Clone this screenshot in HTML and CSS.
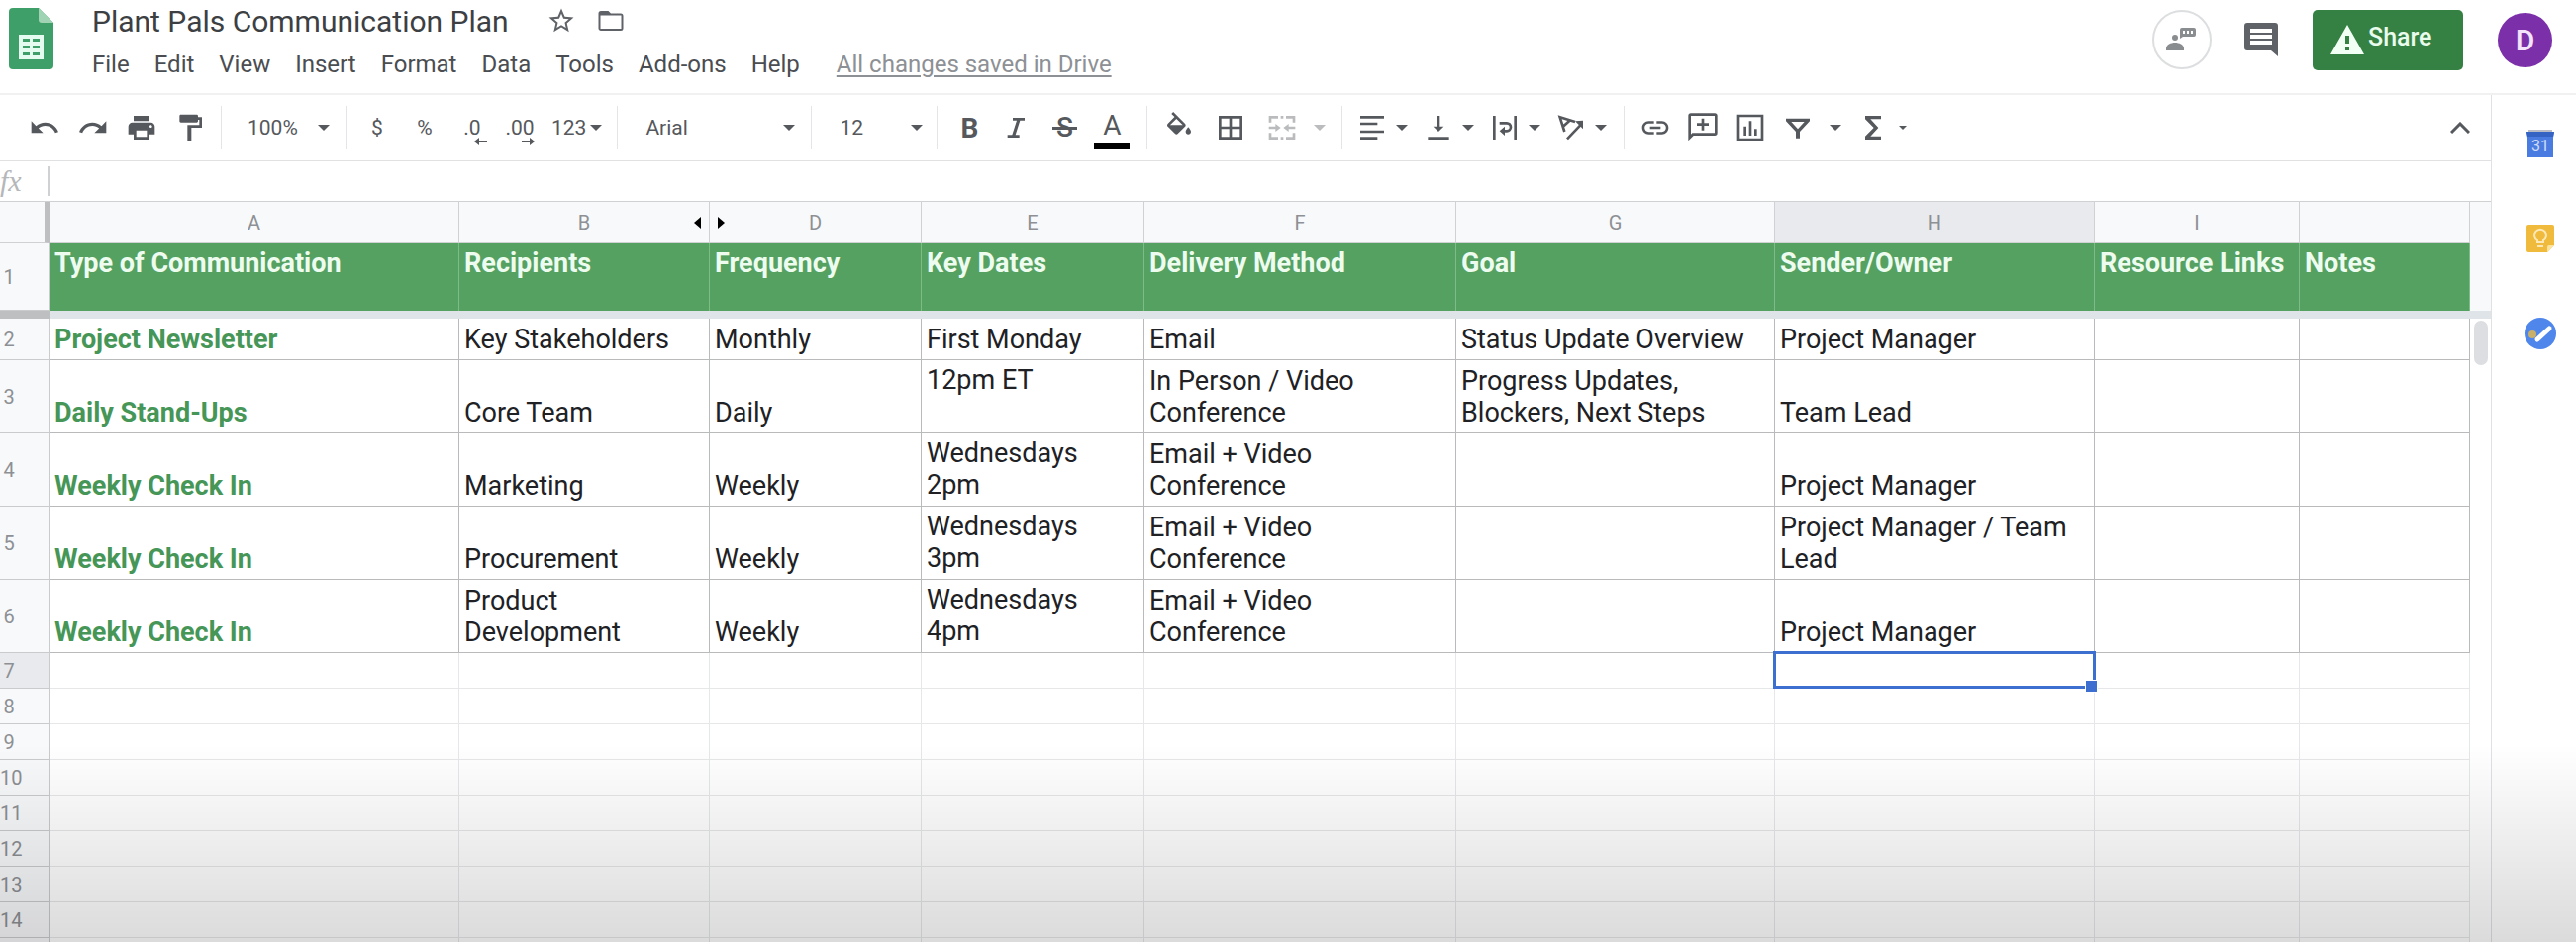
FILE: index.html
```html
<!DOCTYPE html>
<html lang="en">
<head>
<meta charset="utf-8">
<title>Plant Pals Communication Plan</title>
<link rel="stylesheet" href="styles.css">
</head>
<body>
<div class="app">
  <header class="topbar">
    <svg class="logo" viewBox="0 0 45 62" aria-hidden="true">
      <path fill="#3f9f68" d="M4 0h26l15 15v43a4 4 0 0 1-4 4H4a4 4 0 0 1-4-4V4a4 4 0 0 1 4-4z"/>
      <path fill="#9fd3b4" d="M30 0l15 15H33a3 3 0 0 1-3-3z"/>
      <path fill="#e6fbef" fill-rule="evenodd" d="M10 27h25v25H10zM14 31v3h7v-3zM24 31v3h7v-3zM14 38v3h7v-3zM24 38v3h7v-3zM14 45v3h7v-3zM24 45v3h7v-3z"/>
    </svg>
    <div class="doc">
      <div class="title-row">
        <h1 class="title">Plant Pals Communication Plan</h1>
        <button class="plain" aria-label="Star"><svg class="title-icon" viewBox="0 0 24 24"><path d="M22 9.24l-7.19-.62L12 2 9.19 8.63 2 9.24l5.46 4.73L5.82 21 12 17.27 18.18 21l-1.63-7.03L22 9.24zM12 15.4l-3.76 2.27 1-4.28-3.32-2.88 4.38-.38L12 6.1l1.71 4.04 4.38.38-3.32 2.88 1 4.28L12 15.4z"/></svg></button>
        <button class="plain" aria-label="Move"><svg class="title-icon" viewBox="0 0 24 24"><path fill-rule="evenodd" d="M20 6h-8l-2-2H4a2 2 0 0 0-2 2v12c0 1.100.9 2 2 2h16a2 2 0 0 0 2-2V8a2 2 0 0 0-2-2zM20.400 18.400H3.600V7.600H20.400z"/></svg></button>
      </div>
      <nav class="menu">
        <button class="plain">File</button>
        <button class="plain">Edit</button>
        <button class="plain">View</button>
        <button class="plain">Insert</button>
        <button class="plain">Format</button>
        <button class="plain">Data</button>
        <button class="plain">Tools</button>
        <button class="plain">Add-ons</button>
        <button class="plain">Help</button>
        <a class="saved" href="#">All changes saved in Drive</a>
      </nav>
    </div>
    <div class="actions">
      <button class="presence" aria-label="Viewers">
        <svg viewBox="0 0 56 56"><g fill="#8a8d90"><circle cx="21" cy="26" r="3"/><path d="M12 39v-2c0-4 5-6 9-6s9 2 9 6v2z"/><path fill-rule="evenodd" d="M28 16h12a2 2 0 0 1 2 2v5a2 2 0 0 1-2 2H29l-3 2V18a2 2 0 0 1 2-2zM29 19v3h2v-3zM33 19v3h2v-3zM37 19v3h2v-3z"/></g></svg>
      </button>
      <button class="plain" aria-label="Comments"><svg class="comments" viewBox="0 0 34 34"><path fill="#5f6368" fill-rule="evenodd" d="M3 0h28a3 3 0 0 1 3 3v31l-7-6H3a3 3 0 0 1-3-3V3a3 3 0 0 1 3-3zM6 6v4h22V6zM6 12v4h22v-4zM6 18v4h22v-4z"/></svg></button>
      <button class="share">
        <svg class="warn" viewBox="0 0 34 30"><path fill="#f2fff4" fill-rule="evenodd" d="M17 0l17 30H0zM15 11v8h4v-8zM15 22v4h4v-4z"/></svg>
        <span class="share-text">Share</span>
      </button>
      <button class="avatar">D</button>
    </div>
  </header>

  <div class="body">
    <main class="editor">
      <div class="toolbar">
        <div class="group g-history">
          <button class="tool" aria-label="Undo"><svg viewBox="0 0 24 24"><path d="M12.500 8c-2.650 0-5.050.99-6.900 2.600L2 7v9h9l-3.620-3.620c1.390-1.160 3.160-1.880 5.120-1.880 3.540 0 6.550 2.310 7.600 5.500l2.370-.78C21.080 11.030 17.150 8 12.500 8z"/></svg></button>
          <button class="tool" aria-label="Redo"><svg viewBox="0 0 24 24"><path d="M18.400 10.600C16.550 8.990 14.150 8 11.500 8c-4.650 0-8.580 3.030-9.960 7.220L3.900 16c1.050-3.190 4.050-5.500 7.600-5.500 1.950 0 3.730.72 5.120 1.880L13 16h9V7l-3.600 3.600z"/></svg></button>
          <button class="tool" aria-label="Print"><svg viewBox="0 0 24 24"><path d="M19 8H5c-1.660 0-3 1.340-3 3v6h4v4h12v-4h4v-6c0-1.660-1.340-3-3-3zm-3 11H8v-5h8v5zm3-7c-.55 0-1-.45-1-1s.45-1 1-1 1 .45 1 1-.45 1-1 1zm-1-9H6v4h12V3z"/></svg></button>
          <button class="tool" aria-label="Paint format"><svg viewBox="0 0 24 24"><path d="M18 4V3c0-.55-.45-1-1-1H5c-.55 0-1 .45-1 1v4c0 .55.45 1 1 1h12c.55 0 1-.45 1-1V6h1v4h-9v12h3V12h8V4h-3z"/></svg></button>
        </div>
        <div class="group g-zoom">
          <label class="picker picker-zoom"><select aria-label="Zoom"><option>100%</option></select><span class="caret"></span></label>
        </div>
        <div class="group g-number">
          <button class="tool">$</button>
          <button class="tool small">%</button>
          <button class="tool decimals"><span>.0</span><svg class="arrow" viewBox="0 0 13 8"><path d="M0 4l5-4v3h8v2H5v3z"/></svg></button>
          <button class="tool decimals"><span>.00</span><svg class="arrow" viewBox="0 0 13 8"><path d="M13 4L8 0v3H0v2h8v3z"/></svg></button>
          <button class="tool wide">123<span class="caret"></span></button>
        </div>
        <div class="group g-font">
          <label class="picker picker-font"><select aria-label="Font"><option>Arial</option></select><span class="caret"></span></label>
        </div>
        <div class="group g-size">
          <label class="picker picker-size"><select aria-label="Font size"><option>12</option></select><span class="caret"></span></label>
        </div>
        <div class="group g-text">
          <button class="tool bold">B</button>
          <button class="tool" aria-label="Italic"><svg viewBox="0 0 24 24"><path d="M9 4.500v2h3L8.500 17.500H5v2h9v-2h-3l3.500-11H18v-2z"/></svg></button>
          <button class="tool strike"><span>S</span></button>
          <button class="tool color"><span>A</span></button>
        </div>
        <div class="group g-cell">
          <button class="tool" aria-label="Fill color"><svg viewBox="0 0 24 24"><path d="M16.560 8.940L7.620 0 6.210 1.410l2.380 2.380-5.150 5.150c-.59.59-.59 1.540 0 2.120l5.500 5.500c.29.29.68.44 1.060.44s.77-.15 1.060-.44l5.500-5.500c.59-.58.59-1.530 0-2.120zM5.210 10L10 5.210 14.790 10H5.210zM19 11.500s-2 2.170-2 3.500c0 1.100.9 2 2 2s2-.9 2-2c0-1.330-2-3.500-2-3.500z"/></svg></button>
          <button class="tool" aria-label="Borders"><svg viewBox="0 0 24 24"><path fill-rule="evenodd" d="M3 3h18v18H3zM5 5v6h6V5zM13 5v6h6V5zM5 13v6h6v-6zM13 13v6h6v-6z"/></svg></button>
          <button class="tool faded" aria-label="Merge cells" disabled><svg viewBox="0 0 24 24"><path d="M2 3h7v2H4v3H2zM15 3h7v5h-2V5h-5zM2 16h2v3h5v2H2zM20 16h2v5h-7v-2h5zM11 3h2v2h-2zM11 19h2v2h-2zM2 11h5V9l4 3-4 3v-2H2zM22 11h-5V9l-4 3 4 3v-2h5z"/></svg></button>
          <button class="plain faded" aria-label="Merge options" disabled><span class="caret"></span></button>
        </div>
        <div class="group g-align">
          <button class="tool drop" aria-label="Horizontal align"><svg viewBox="0 0 24 24"><path d="M3 3h18v2H3zM3 8h13v2H3zM3 14h18v2H3zM3 19h13v2H3z"/></svg><span class="caret"></span></button>
          <button class="tool drop" aria-label="Vertical align"><svg viewBox="0 0 24 24"><path d="M16 11h-3V3h-2v8H8l4 4 4-4zM4 19v2h16v-2z"/></svg><span class="caret"></span></button>
          <button class="tool drop" aria-label="Text wrapping"><svg viewBox="0 0 24 24"><path d="M3 3h2v18H3zM19 3h2v18h-2zM8 7.500h5.500a4 4 0 0 1 0 8H12V18l-4-3.500 4-3.500v2.500h1.500a2 2 0 0 0 0-4H8z"/></svg><span class="caret"></span></button>
          <button class="tool drop" aria-label="Text rotation"><svg viewBox="0 0 24 24"><g fill="none" stroke="#55585c" stroke-width="2"><path d="M7 15L3.500 4 15 7.500M5.500 11.500L11.500 6M9 20.500L19 10"/></g><path d="M21 6.500v6.500l-6-6z"/></svg><span class="caret"></span></button>
        </div>
        <div class="group g-insert">
          <button class="tool" aria-label="Insert link"><svg viewBox="0 0 24 24"><path d="M3.900 12c0-1.710 1.390-3.100 3.100-3.100h4V7H7c-2.760 0-5 2.240-5 5s2.240 5 5 5h4v-1.900H7c-1.710 0-3.100-1.390-3.100-3.100zM8 13h8v-2H8v2zm9-6h-4v1.900h4c1.710 0 3.100 1.390 3.100 3.100s-1.390 3.100-3.100 3.100h-4V17h4c2.760 0 5-2.240 5-5s-2.240-5-5-5z"/></svg></button>
          <button class="tool" aria-label="Insert comment"><svg viewBox="0 0 24 24"><path fill-rule="evenodd" d="M3 1h18a2 2 0 0 1 2 2v13a2 2 0 0 1-2 2H5l-4 4V3a2 2 0 0 1 2-2zM3 3v14l1-1h17V3zM11 5h2v3.500h3.500v2H13V14h-2v-3.500H7.500v-2H11z"/></svg></button>
          <button class="tool" aria-label="Insert chart"><svg viewBox="0 0 24 24"><path fill-rule="evenodd" d="M2 2h20v20H2zM4 4v16h16V4zM7 11h2v7H7zM11 7h2v11h-2zM15 13h2v5h-2z"/></svg></button>
          <button class="tool" aria-label="Create a filter"><svg viewBox="0 0 24 24"><path fill-rule="evenodd" d="M3 5h18v2l-7.500 8v5h-3v-5L3 7zM7 7.500l5 5.500 5-5.500z"/></svg></button>
          <button class="plain" aria-label="Filter views"><span class="caret"></span></button>
          <button class="tool sum" aria-label="Functions"><svg viewBox="0 0 24 24"><path d="M18 3H6v2.500l6.500 6.500L6 18.500V21h12v-2.500H10l6-6.500-6-6.500h8z"/></svg><span class="caret tiny"></span></button>
        </div>
        <button class="plain collapse" aria-label="Hide the menus"><svg viewBox="0 0 20 12" fill="none" stroke="#55585c" stroke-width="3"><path d="M1 11l9-9 9 9"/></svg></button>
      </div>

      <div class="formula">
        <label class="fx" for="formula-input">fx</label>
        <input id="formula-input" class="formula-input" type="text">
      </div>

      <div class="sheet">
        <table class="grid">
          <colgroup>
            <col class="c-row"><col class="c-a"><col class="c-b"><col class="c-d"><col class="c-e"><col class="c-f"><col class="c-g"><col class="c-h"><col class="c-i"><col>
          </colgroup>
          <thead>
            <tr class="letters">
              <th class="corner"></th><th>A</th><th class="before-hidden">B</th><th class="after-hidden">D</th><th>E</th><th>F</th><th>G</th><th class="active">H</th><th>I</th><th></th>
            </tr>
            <tr class="headings">
              <th class="num">1</th><th>Type of Communication</th><th>Recipients</th><th>Frequency</th><th>Key Dates</th><th>Delivery Method</th><th>Goal</th><th>Sender/Owner</th><th>Resource Links</th><th>Notes</th>
            </tr>
            <tr class="frozen"><td class="frozen-num"></td><td colspan="9"></td></tr>
          </thead>
          <tbody class="filled">
            <tr class="single"><th class="num">2</th><td class="kind">Project Newsletter</td><td>Key Stakeholders</td><td>Monthly</td><td>First Monday</td><td>Email</td><td>Status Update Overview</td><td>Project Manager</td><td></td><td></td></tr>
            <tr><th class="num">3</th><td class="kind">Daily Stand-Ups</td><td>Core Team</td><td>Daily</td><td class="top">12pm ET</td><td>In Person / Video Conference</td><td>Progress Updates, Blockers, Next Steps</td><td>Team Lead</td><td></td><td></td></tr>
            <tr><th class="num">4</th><td class="kind">Weekly Check In</td><td>Marketing</td><td>Weekly</td><td class="top">Wednesdays<br>2pm</td><td>Email + Video<br>Conference</td><td></td><td>Project Manager</td><td></td><td></td></tr>
            <tr><th class="num">5</th><td class="kind">Weekly Check In</td><td>Procurement</td><td>Weekly</td><td class="top">Wednesdays<br>3pm</td><td>Email + Video<br>Conference</td><td></td><td>Project Manager / Team Lead</td><td></td><td></td></tr>
            <tr><th class="num">6</th><td class="kind">Weekly Check In</td><td>Product Development</td><td>Weekly</td><td class="top">Wednesdays<br>4pm</td><td>Email + Video<br>Conference</td><td></td><td>Project Manager</td><td></td><td></td></tr>
          </tbody>
          <tbody class="blank">
            <tr><th class="num active">7</th><td></td><td></td><td></td><td></td><td></td><td></td><td class="selected"></td><td></td><td></td></tr>
            <tr><th class="num">8</th><td></td><td></td><td></td><td></td><td></td><td></td><td></td><td></td><td></td></tr>
            <tr><th class="num">9</th><td></td><td></td><td></td><td></td><td></td><td></td><td></td><td></td><td></td></tr>
            <tr><th class="num">10</th><td></td><td></td><td></td><td></td><td></td><td></td><td></td><td></td><td></td></tr>
            <tr><th class="num">11</th><td></td><td></td><td></td><td></td><td></td><td></td><td></td><td></td><td></td></tr>
            <tr><th class="num">12</th><td></td><td></td><td></td><td></td><td></td><td></td><td></td><td></td><td></td></tr>
            <tr><th class="num">13</th><td></td><td></td><td></td><td></td><td></td><td></td><td></td><td></td><td></td></tr>
            <tr><th class="num">14</th><td></td><td></td><td></td><td></td><td></td><td></td><td></td><td></td><td></td></tr>
            <tr><th class="num"></th><td></td><td></td><td></td><td></td><td></td><td></td><td></td><td></td><td></td></tr>
          </tbody>
        </table>
        <div class="gutter">
          <div class="gutter-head"></div>
          <div class="gutter-bar"></div>
          <div class="thumb"></div>
        </div>
      </div>
    </main>

    <aside class="side">
      <button class="plain" aria-label="Calendar"><svg viewBox="0 0 32 32"><path fill="#b9bcc4" d="M4 2h24v4H4z"/><path fill="#4a7be0" d="M2 4h28l-1 6v20H3V10z"/><path fill="#3563c4" d="M2 4h28l-1 5H3z"/><text class="cal-text" x="16" y="24" text-anchor="middle">31</text></svg></button>
      <button class="plain" aria-label="Keep"><svg viewBox="0 0 32 32"><path fill="#f0bb3c" d="M4 2h24a2 2 0 0 1 2 2v19l-7 7H4a2 2 0 0 1-2-2V4a2 2 0 0 1 2-2z"/><path fill="#fbe3a0" d="M30 23l-7 7v-5a2 2 0 0 1 2-2z"/><path fill="none" stroke="#fde9b8" stroke-width="2" d="M13 20v-2a6 6 0 1 1 6 0v2zM13 24h6"/></svg></button>
      <button class="plain" aria-label="Tasks"><svg viewBox="0 0 32 32"><circle cx="16" cy="16" r="16" fill="#4f86ec"/><path fill="none" stroke="#fff" stroke-width="5" stroke-linecap="round" d="M13 22L25 11"/><circle cx="8" cy="17" r="4" fill="#c9b06a"/></svg></button>
    </aside>
  </div>
</div>
<div class="shade"></div>
</body>
</html>
```
FILE: styles.css
```css
* { box-sizing: border-box; }
html, body { height: 100%; }
body {
  margin: 0;
  overflow: hidden;
  background: #fff;
  color: #202124;
  font-family: Roboto, "Liberation Sans", sans-serif;
}
button, select, input { font: inherit; color: inherit; }
.plain { border: 0; padding: 0; background: none; display: flex; align-items: center; }
.app { display: flex; flex-direction: column; height: 100vh; }

/* Title bar */
.topbar {
  display: flex;
  height: 96px;
  flex: none;
  padding-left: 9px;
  border-bottom: 2px solid #f1f1f2;
}
.logo { width: 45px; height: 62px; margin-top: 8px; flex: none; }
.doc { margin-left: 39px; flex: 1; }
.title-row { display: flex; align-items: center; height: 42px; gap: 20px; }
.title { margin: 0 18px 0 0; font-size: 30px; font-weight: 400; color: #3c4043; white-space: nowrap; }
.title-icon { width: 30px; height: 30px; fill: #5f6368; }
.menu { display: flex; align-items: center; height: 46px; gap: 25px; font-size: 24px; color: #4a4d51; white-space: nowrap; }
.saved { margin-left: 12px; color: #8d9094; text-underline-offset: 3px; }
.actions { display: flex; align-items: center; height: 80px; padding-right: 24px; }
.presence { width: 60px; height: 60px; padding: 0; border: 2px solid #dcdee0; border-radius: 50%; background: #fff; }
.presence svg { display: block; width: 56px; height: 56px; }
.comments { display: block; width: 34px; height: 34px; margin: 0 35px 0 33px; }
.share {
  display: flex;
  align-items: center;
  gap: 4px;
  width: 152px;
  height: 61px;
  padding: 0 18px;
  border: 0;
  border-radius: 5px;
  background: #358143;
  color: #e9fbec;
  font-size: 25px;
  font-weight: 500;
}
.warn { width: 34px; height: 30px; flex: none; }
.share-text { padding-bottom: 5px; }
.avatar {
  width: 55px;
  height: 55px;
  margin-left: 35px;
  padding: 0;
  border: 0;
  border-radius: 50%;
  background: #7b2fa8;
  color: #f3e4fb;
  font-size: 30px;
  font-weight: 500;
}

.body { display: flex; flex: 1; min-height: 0; }
.editor { display: flex; flex-direction: column; flex: 1; min-width: 0; }
.side {
  display: flex;
  flex-direction: column;
  align-items: center;
  gap: 64px;
  width: 86px;
  padding: 33px 0 0 13px;
  border-left: 1px solid #dfe1e3;
}
.side svg { display: block; width: 32px; height: 32px; }
.cal-text { font-size: 16px; fill: #cfdcf8; }

/* Toolbar */
.toolbar { display: flex; align-items: center; height: 67px; flex: none; border-bottom: 1px solid #e0e1e3; color: #55585c; font-size: 21px; }
.group { display: flex; align-items: center; height: 44px; border-right: 1px solid #e4e5e7; gap: 16px; }
.tool {
  display: flex;
  align-items: center;
  justify-content: center;
  width: 32px;
  height: 36px;
  padding: 0;
  border: 0;
  background: none;
}
.tool svg { display: block; width: 32px; height: 32px; flex: none; fill: #55585c; }
.caret { border: 6px solid transparent; border-top-color: #55585c; border-bottom: 0; }
.caret.tiny { border-width: 4px; border-bottom: 0; }
.faded { opacity: .4; }
.g-history { gap: 17px; padding: 0 15px 0 29px; }
.g-zoom { padding: 0 16px 0 26px; }
.g-number { padding: 0 15px; }
.g-font { padding: 0 16px 0 28px; }
.g-size { padding: 0 14px 0 28px; }
.g-text { padding: 0 19px 0 16px; }
.g-cell { gap: 20px; padding: 0 16px; }
.g-cell .caret { margin-left: -4px; }
.g-align { gap: 13px; padding: 0 16px 0 13px; }
.g-insert { padding-left: 15px; border: 0; }
.wide { width: auto; gap: 4px; }
.drop { width: 54px; gap: 8px; justify-content: flex-start; padding-left: 1px; }
.sum { width: 50px; gap: 10px; }
.bold { font-size: 28px; font-weight: 700; }
.strike span { position: relative; font-size: 28px; font-weight: 500; line-height: 32px; }
.strike span::after { content: ""; position: absolute; left: -4px; right: -4px; top: 15px; height: 3px; background: #55585c; }
.color { align-items: flex-end; width: 36px; height: 44px; margin: 0 -2px; }
.color span { width: 36px; height: 38px; border-bottom: 6px solid #000; font-size: 28px; line-height: 28px; }
.decimals { position: relative; }
.tool .arrow { position: absolute; right: 1px; bottom: 0; width: 13px; height: 8px; }
.picker { display: flex; align-items: center; }
.picker select { flex: 1; min-width: 0; padding: 0; border: 0; appearance: none; background: none; }
.picker-zoom { width: 83px; }
.picker-font { width: 151px; }
.picker-size { width: 84px; }
.collapse { margin-left: auto; padding-right: 21px; }
.collapse svg { width: 20px; height: 12px; }

/* Formula bar */
.formula { display: flex; align-items: center; height: 41px; flex: none; border-bottom: 1px solid #cfd1d3; }
.fx { width: 48px; color: #b5b7ba; font: italic 30px "Liberation Serif", serif; }
.formula-input { flex: 1; height: 30px; padding: 0 8px; border: 0; border-left: 2px solid #cfd1d3; outline: 0; background: none; font-size: 21px; }

/* Cells */
.sheet { display: flex; flex: 1; min-height: 0; overflow: hidden; align-items: flex-start; }
.grid { flex: 1; width: 100%; min-width: 0; table-layout: fixed; border-collapse: separate; border-spacing: 0; }
.c-row { width: 50px; }
.c-a { width: 414px; }
.c-b { width: 253px; }
.c-d { width: 214px; }
.c-e { width: 225px; }
.c-f { width: 315px; }
.c-g { width: 322px; }
.c-h { width: 323px; }
.c-i { width: 207px; }
.grid th, .grid td { padding: 0 5px; border-right: 1px solid #e6e7e8; border-bottom: 1px solid #e6e7e8; }
.letters th { height: 42px; background: #f8f9fb; border-color: #cfd1d3; color: #8d9094; font-size: 20px; font-weight: 400; }
.grid .letters th { border-color: #cfd1d3; }
.grid .letters .corner { border-right: 5px solid #bdbfc1; }
.grid .active { background: #e8eaed; }
.before-hidden, .after-hidden { position: relative; }
.before-hidden::after, .after-hidden::after { content: ""; position: absolute; top: 15px; border: 6px solid transparent; }
.before-hidden::after { right: 8px; border-right: 7px solid #000; border-left: 0; }
.after-hidden::after { left: 8px; border-left: 7px solid #000; border-right: 0; }
.grid .num { padding: 0 31px 0 0; border-color: #c9cbcd; background: #f8f9fb; color: #8d9094; font-size: 20px; font-weight: 400; text-align: center; vertical-align: middle; white-space: nowrap; }
.grid .num.active { background: #e8eaed; }
.headings th { height: 68px; background: #55a162; color: #eefcf0; font-size: 27px; line-height: 32px; font-weight: 700; text-align: left; vertical-align: top; white-space: nowrap; }
.grid .headings th:not(.num) { padding-top: 4px; border-right-color: #7dbb87; border-bottom: 0; }
.grid .frozen td { height: 8px; padding: 0; border: 0; background: #dfe4e8; }
.grid .frozen .frozen-num { background: #bdbfc1; }
.filled td { height: 74px; font-size: 27px; line-height: 32px; vertical-align: bottom; }
.grid .filled td { padding: 4px 5px; border-color: #b9babb; }
.filled .single td { height: 42px; white-space: nowrap; }
.grid .filled .top { vertical-align: top; }
.filled .kind { color: #469657; font-weight: 700; }
.blank td { height: 36px; }
.selected { position: relative; }
.selected::before { content: ""; position: absolute; inset: -2px -2px -1px -2px; border: 3px solid #3c6fd0; }
.selected::after { content: ""; position: absolute; right: -4px; bottom: -5px; width: 11px; height: 11px; border: 1px solid #fff; background: #3c6fd0; }

.gutter { width: 21px; flex: none; display: flex; flex-direction: column; align-items: center; }
.gutter-head { width: 100%; height: 110px; background: #f8f9fa; }
.gutter-bar { width: 100%; height: 8px; background: #dfe4e8; }
.thumb { width: 14px; height: 45px; margin-top: 2px; border-radius: 7px; background: #dcdee1; }

.shade { position: fixed; left: 0; right: 0; bottom: 0; height: 200px; background: linear-gradient(rgba(0, 0, 0, 0), rgba(0, 0, 0, .14)); pointer-events: none; }
```
